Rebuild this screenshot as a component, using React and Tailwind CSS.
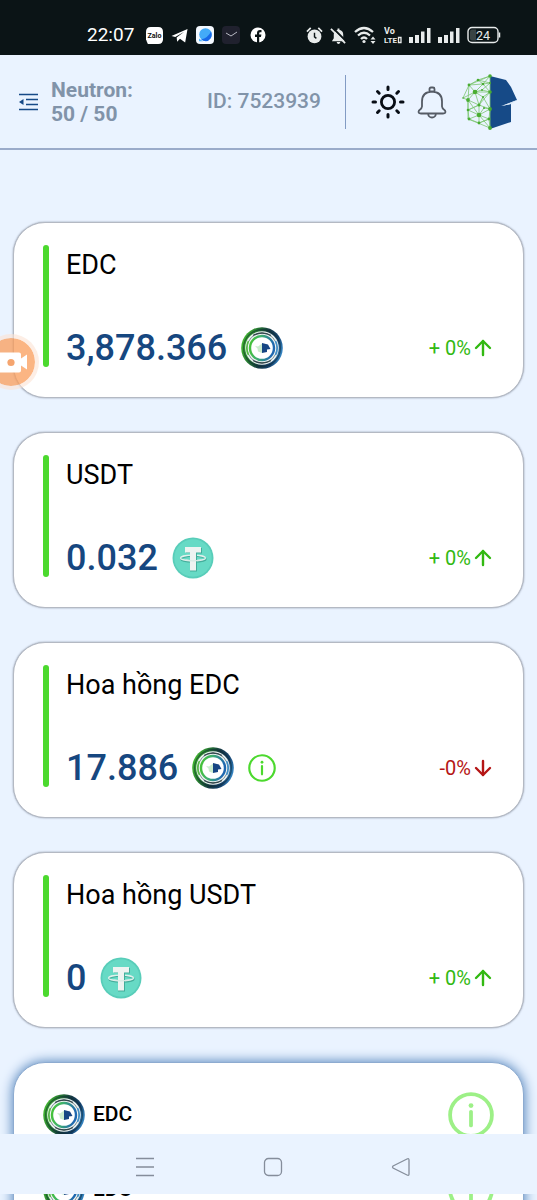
import React from 'react';
import { ArrowUp, ArrowDown } from 'lucide-react';

const wallets = [
  { name: 'EDC', amount: '3,878.366', coin: 'edc', change: '+ 0%', up: true },
  { name: 'USDT', amount: '0.032', coin: 'usdt', change: '+ 0%', up: true },
  { name: 'Hoa hồng EDC', amount: '17.886', coin: 'edc', change: '-0%', up: false, info: true },
  { name: 'Hoa hồng USDT', amount: '0', coin: 'usdt', change: '+ 0%', up: true },
];

const holdings = [
  { id: 1, name: 'EDC' },
  { id: 2, name: 'EDC' },
];

function EdcCoin() {
  return (
    <svg viewBox="0 0 42 42" className="size-[42px] shrink-0" aria-hidden="true">
      <defs>
        <linearGradient id="edcRing" x1="0" y1="0.35" x2="1" y2="0.65">
          <stop offset="0" stopColor="#43b92f" />
          <stop offset="0.3" stopColor="#247332" />
          <stop offset="0.55" stopColor="#153743" />
          <stop offset="0.8" stopColor="#15426e" />
          <stop offset="1" stopColor="#3a8fd0" />
        </linearGradient>
        <linearGradient id="edcInner" x1="0" y1="0" x2="1" y2="0.2">
          <stop offset="0" stopColor="#46c52e" />
          <stop offset="0.45" stopColor="#3fb070" />
          <stop offset="1" stopColor="#1f68b0" />
        </linearGradient>
      </defs>
      <circle cx="21" cy="21" r="20.8" fill="url(#edcRing)" />
      <circle cx="21" cy="21" r="18.4" fill="none" stroke="#0b2730" strokeWidth="1.2" opacity="0.5" />
      <circle cx="21" cy="21" r="16.8" fill="#eef4f3" />
      <circle cx="21" cy="21" r="15" fill="none" stroke="#7d9094" strokeWidth="1" />
      <path d="M12 8.500q9-5 18 0M12 33.500q9 5 18 0" fill="none" stroke="#34484d" strokeWidth="1.4" />
      <path d="M7.500 14a15.500 15.500 0 0 0 0 14" fill="none" stroke="#55bd42" strokeWidth="1.6" />
      <path d="M34.500 14a15.500 15.500 0 0 1 0 14" fill="none" stroke="#3f8fc8" strokeWidth="1.6" />
      <circle cx="21" cy="21" r="12" fill="#fff" stroke="url(#edcInner)" strokeWidth="2.4" />
      <path d="M14 19l3 .5 4-3v9.500l-4-1.500-.5-3z" fill="#cbeccf" />
      <path d="M21 16l6 1.500 2.500 4.500-3.500.5v2.500l-5 1z" fill="#164583" />
    </svg>
  );
}

function UsdtCoin() {
  return (
    <svg viewBox="0 0 42 42" className="size-[42px] shrink-0" aria-hidden="true">
      <circle cx="21" cy="21" r="20.5" fill="#58cdb9" />
      <circle cx="21" cy="21" r="18.7" fill="#67dac5" />
      <ellipse cx="21.5" cy="22" rx="12.5" ry="3" fill="none" stroke="#45ae9c" strokeWidth="1.6" />
      <ellipse cx="21" cy="21" rx="12.5" ry="2.8" fill="none" stroke="#e2f0ec" strokeWidth="1.3" />
      <path d="M14 11h16v5.500h-5v18h-7V16h-4z" fill="#42ad9a" />
      <path d="M13 10h16v5.500h-5v18h-6v-18h-5z" fill="#eef3f1" />
      <path d="M14 23c4 1 10 1 15 0" fill="none" stroke="#d8eae5" strokeWidth="1.2" />
    </svg>
  );
}

function InfoIcon({ className, strokeWidth }) {
  return (
    <svg viewBox="0 0 44 44" className={className} fill="none" stroke="currentColor" strokeWidth={strokeWidth} strokeLinecap="round" aria-hidden="true">
      <circle cx="22" cy="22" r="20" />
      <path d="M22 19v13" />
      <circle cx="22" cy="13" r={strokeWidth / 2 + 0.5} fill="currentColor" stroke="none" />
    </svg>
  );
}

const logoNodes = [
  [28, 2, 1.8], [16, 6, 1.3], [21, 10, 1.3], [28, 9, 1], [7, 11, 1.4], [13, 18, 2.3],
  [20, 16, 1], [28, 18, 1.8], [6, 26, 1.9], [21, 23, 1], [17, 31, 1.5], [28, 35, 1.9],
  [6, 36, 1.3], [22, 34, 1], [17, 41, 2.3], [7, 45, 1.4], [17, 49, 1.4], [27, 45, 1.4], [28, 54, 1.9],
  [1, 24, 0.8],
];

function BrandLogo() {
  return (
    <svg viewBox="0 -1 56 58" className="h-[58px] w-14" aria-hidden="true">
      <path d="M28 2l16 4 5 7 6 13-15 6 9-2v18l-21 7z" fill="#164a87" />
      <path d="M39 32l16-6-6 4z" fill="#d9e7f5" />
      <path
        d="M28 2L16 6 7 11 1 24l5 2v19l10 4 12 5zM28 2L7 11l14-1 7-1-12-3 5 4 7-8M7 11l6 7 8-8 7 8-8-2-7 2M7 11l-1 15 7-8 15 0-7 5-8-5 4 13 4-8M20 16l8-7M1 24l12-6M6 26l11 5 4-8 7 12-11-4M28 18L17 31 6 36l11 5 5-7M6 26l0 10 11-5v10L7 45l-1-9M22 34l6 1-11 6 10 4-10 4V41l11 13M28 35l-1 10 1 9M7 45l10 4 10-4M6 26l11 15"
        fill="none"
        stroke="#7cc571"
        strokeWidth="0.8"
      />
      {logoNodes.map(([x, y, r], i) => (
        <circle key={i} cx={x} cy={y} r={r} fill="#49ad32" />
      ))}
    </svg>
  );
}

function StatusBar() {
  return (
    <div className="flex h-[55px] items-start justify-between bg-[#0b1416] pt-[23px] pr-9 pl-[87px] text-[#e8ebeb]">
      <div className="flex h-6 items-center">
        <span className="mr-3 text-[19px] leading-6 text-white">22:07</span>
        <svg viewBox="0 0 18 18" className="mr-2 size-[17px]" aria-label="Zalo">
          <path d="M5 0h8q5 0 5 5v8q0 5-5 5H2l-1-2-1-3V5q0-5 5-5z" fill="#fff" />
          <text x="9" y="11.5" textAnchor="middle" fontSize="7.5" fontWeight="700" fill="#111">Zalo</text>
        </svg>
        <svg viewBox="0 0 18 18" className="mr-2 size-[17px]" aria-hidden="true">
          <path d="M.5 9.500L17.500 2 15 16.500l-5.500-4-3 3-.5-4.500L14 5 4.500 10.500z" fill="#fff" />
        </svg>
        <svg viewBox="0 0 18 18" className="mr-2 size-[18px]" aria-hidden="true">
          <rect width="18" height="18" rx="4" fill="#f4f9ff" />
          <circle cx="9.5" cy="8.5" r="6.3" fill="#43aaf8" />
          <path d="M15 5.500Q12 12 5 13.500q6 4 9.500-1 2-3 .5-7z" fill="#1768e8" />
          <path d="M3 12.500v2.700h4z" fill="#51b6fc" />
        </svg>
        <svg viewBox="0 0 18 18" className="mr-2.5 size-[18px]" aria-hidden="true">
          <rect width="18" height="18" rx="4" fill="#20212e" />
          <path d="M4 7l5 3 6-4" fill="none" stroke="#b8bac4" strokeWidth="1" />
        </svg>
        <svg viewBox="0 0 16 16" className="size-4" aria-hidden="true">
          <circle cx="8" cy="8" r="7.5" fill="#fff" />
          <path d="M7 16v-6H5V7.500h2V6q0-3 3-3h1.500v2.300H10q-.8 0-.8.900v1.300h2.200L11 10H9.200v6z" fill="#0b1416" />
        </svg>
      </div>
      <div className="flex h-6 items-center gap-[7px]">
        <svg viewBox="0 0 18 18" className="size-[17px]" aria-hidden="true">
          <circle cx="9" cy="10" r="7.3" fill="currentColor" />
          <path d="M1 5l4-4M13 1l4 4" stroke="currentColor" strokeWidth="1.8" />
          <path d="M9 6v4.500l2 1.500" fill="none" stroke="#0b1416" strokeWidth="1.5" />
        </svg>
        <svg viewBox="0 0 18 18" className="size-[17px]" aria-hidden="true">
          <path d="M2 15l2-3V8q0-4 4-5V1.500h2V3q4 1 4 5v4l2 3zM7 16h4q-.5 2-2 2t-2-2z" fill="currentColor" />
          <path d="M2 0l16 16" stroke="#0b1416" strokeWidth="2" />
          <path d="M1 2l15 15" stroke="currentColor" strokeWidth="1.8" />
        </svg>
        <svg viewBox="0 0 23 18" className="h-[18px] w-[23px]" fill="none" stroke="currentColor" strokeWidth="2.3" aria-hidden="true">
          <path d="M1 6q9-8 18 0M4 9.500q6-5.500 12 0M7 13q3-3 6 0" />
          <circle cx="10" cy="15.5" r="1.6" fill="currentColor" stroke="none" />
          <path d="M16.500 13.500h5L19 10.500zM16.500 15h5L19 18z" fill="currentColor" stroke="none" />
        </svg>
        <svg viewBox="0 0 18 18" className="size-[18px]" fill="currentColor" fontWeight="700" aria-label="VoLTE">
          <text x="0" y="8" fontSize="9">Vo</text>
          <text x="0" y="17" fontSize="8">LTE</text>
          <path d="M14.500 11.500h2.500v5h-2.500z" fill="none" stroke="currentColor" strokeWidth="1.3" />
        </svg>
        {[1, 2].map((sim) => (
          <svg key={sim} viewBox="0 0 22 16" className="h-4 w-[22px]" fill="currentColor" aria-hidden="true">
            <path d="M0 10h4v6H0zM6 8h4v8H6zM12 4.500h3.500V16H12zM18 1h3.500v15H18z" />
          </svg>
        ))}
        <svg viewBox="0 0 34 18" className="h-[18px] w-[34px]" aria-label="24%">
          <rect x="1" y="1.500" width="30" height="15" rx="4" fill="none" stroke="currentColor" strokeWidth="1.4" />
          <path d="M5 3.500h4v11H5q-2 0-2-2v-7q0-2 2-2z" fill="#394344" />
          <path d="M32.500 6.500v5" stroke="currentColor" strokeWidth="1.5" />
          <text x="16" y="13.5" textAnchor="middle" fontSize="12.5" fill="currentColor">24</text>
        </svg>
      </div>
    </div>
  );
}

function Header() {
  return (
    <header className="flex h-[95px] items-center border-b-2 border-[#9aabca] pr-[19px] pl-[18px]">
      <button type="button" aria-label="Menu" className="mr-3 shrink-0 text-[#164a87]">
        <svg viewBox="0 0 21 18" className="h-[18px] w-[21px]" fill="none" stroke="currentColor" strokeWidth="1.7">
          <path d="M1 1.500h19M8 6.500h12M8 11.500h12M1 16.500h19" />
          <path d="M1 9l4.500-3v6z" fill="currentColor" stroke="none" />
        </svg>
      </button>
      <div className="text-[21px] leading-6 font-bold text-[#8193a9]">
        <p>Neutron:</p>
        <p>50 / 50</p>
      </div>
      <div className="ml-auto text-[21px] font-medium text-[#8193a9]">ID: 7523939</div>
      <div className="mr-[25px] ml-6 h-[54px] w-px bg-[#829bc4]"></div>
      <button type="button" aria-label="Theme" className="mr-3 text-[#080d15]">
        <svg viewBox="0 0 34 34" className="size-[34px]" fill="none" stroke="currentColor" strokeWidth="3" strokeLinecap="round">
          <circle cx="17" cy="17" r="6.6" strokeWidth="2.8" />
          <path d="M17 2v2.500M17 29.500v2.500M2 17h2.500M29.500 17h2.500M6.500 6.500l1.700 1.700M25.800 25.800l1.700 1.700M6.500 27.500l1.700-1.700M25.800 8.200l1.700-1.700" />
        </svg>
      </button>
      <button type="button" aria-label="Notifications" className="mr-[15px] text-[#555b65]">
        <svg viewBox="0 0 30 34" className="h-[34px] w-[30px]" fill="none" stroke="currentColor" strokeWidth="1.8">
          <path d="M12.500 6.500V4q0-1.500 1.500-1.500h2q1.500 0 1.500 1.500v2.500M5 16.500q0-9.500 10-10 10 .5 10 10v5q0 2 3 4 1.500 3-2 3H4q-3.500 0-2-3 3-2 3-4zM11 28.500q.5 4 4 4t4-4" />
        </svg>
      </button>
      <a href="#profile" aria-label="EDC">
        <BrandLogo />
      </a>
    </header>
  );
}

function WalletCard({ wallet }) {
  const Arrow = wallet.up ? ArrowUp : ArrowDown;
  return (
    <section className="flex rounded-[32px] border border-[#b4b9c3] bg-white py-[22px] pr-7 pl-[29px] shadow-[0_0_2px_#8790a0]">
      <div className="mr-[17px] mb-2 w-1.5 rounded-full bg-[#4cd92e]"></div>
      <div className="flex-1">
        <h2 className="mb-[46px] pt-1 text-[27px] leading-8 text-black">{wallet.name}</h2>
        <div className="mb-1.5 flex items-center">
          <span className="mr-3.5 text-4xl leading-[42px] font-medium text-[#164780]">{wallet.amount}</span>
          {wallet.coin === 'edc' ? <EdcCoin /> : <UsdtCoin />}
          {wallet.info && (
            <button type="button" aria-label="Info" className="ml-3.5 text-[#4cd92e]">
              <InfoIcon className="size-7" strokeWidth={3.4} />
            </button>
          )}
          <span className={`ml-auto flex items-center text-xl ${wallet.up ? 'text-[#32b912]' : 'text-[#b51616]'}`}>
            {wallet.change}
            <Arrow size={24} strokeWidth={2.4} />
          </span>
        </div>
      </div>
    </section>
  );
}

export default function App() {
  return (
    <div className="relative h-screen overflow-hidden bg-[#eaf3ff] font-[Roboto,sans-serif]">
      <StatusBar />
      <Header />

      <main className="flex flex-col gap-[34px] px-[13px] pt-[72px]">
        {wallets.map((w) => (
          <WalletCard key={w.name} wallet={w} />
        ))}

        <section className="flex flex-col gap-[31px] rounded-t-[32px] border border-[#8dabd0] bg-white px-[29px] pt-[30px] pb-8 shadow-[0_0_12px_1px_#5988be]">
          {holdings.map((h) => (
            <div key={h.id} className="flex h-11 items-center">
              <EdcCoin />
              <span className="ml-2 text-[21px] font-medium text-black">{h.name}</span>
              <button type="button" aria-label="Info" className="ml-auto text-[#9df087]">
                <InfoIcon className="size-[46px]" strokeWidth={3.6} />
              </button>
            </div>
          ))}
        </section>
      </main>

      {/* Floating screen recorder bubble */}
      <button type="button" aria-label="Record" className="absolute top-[334px] -left-[17px] size-14 rounded-full border-4 border-[#fbe3d3]/60 bg-[#fa9c5a]/75 bg-clip-padding">
        <svg viewBox="0 0 48 48" className="size-12" aria-hidden="true">
          <path d="M12 14.500h20q2 0 2 2v4l6-4v15l-6-4v5q0 2-2 2H12z" fill="#fff" />
          <circle cx="24" cy="24.500" r="3.600" fill="#f5a56f" />
        </svg>
      </button>

      <nav className="absolute inset-x-0 bottom-1.5 flex h-[60px] items-center justify-center gap-[108px] bg-[#eaf3ff] pt-1.5 pl-2 text-[#858d9b]">
        <button type="button" aria-label="Recent apps">
          <svg viewBox="0 0 20 20" className="size-5" fill="none" stroke="currentColor" strokeWidth="1.5">
            <path d="M1 1.500h18M1 10h18M1 18.500h18" />
          </svg>
        </button>
        <button type="button" aria-label="Home">
          <svg viewBox="0 0 20 20" className="size-5" fill="none" stroke="currentColor" strokeWidth="1.3">
            <rect x="1.5" y="1.5" width="17" height="17" rx="4" />
          </svg>
        </button>
        <button type="button" aria-label="Back">
          <svg viewBox="0 0 20 20" className="size-5" fill="none" stroke="currentColor" strokeWidth="1.3">
            <path d="M2 9L16 2q2-1 2 1v14q0 2-2 1L2 11q-1-1 0-2z" />
          </svg>
        </button>
      </nav>
    </div>
  );
}
